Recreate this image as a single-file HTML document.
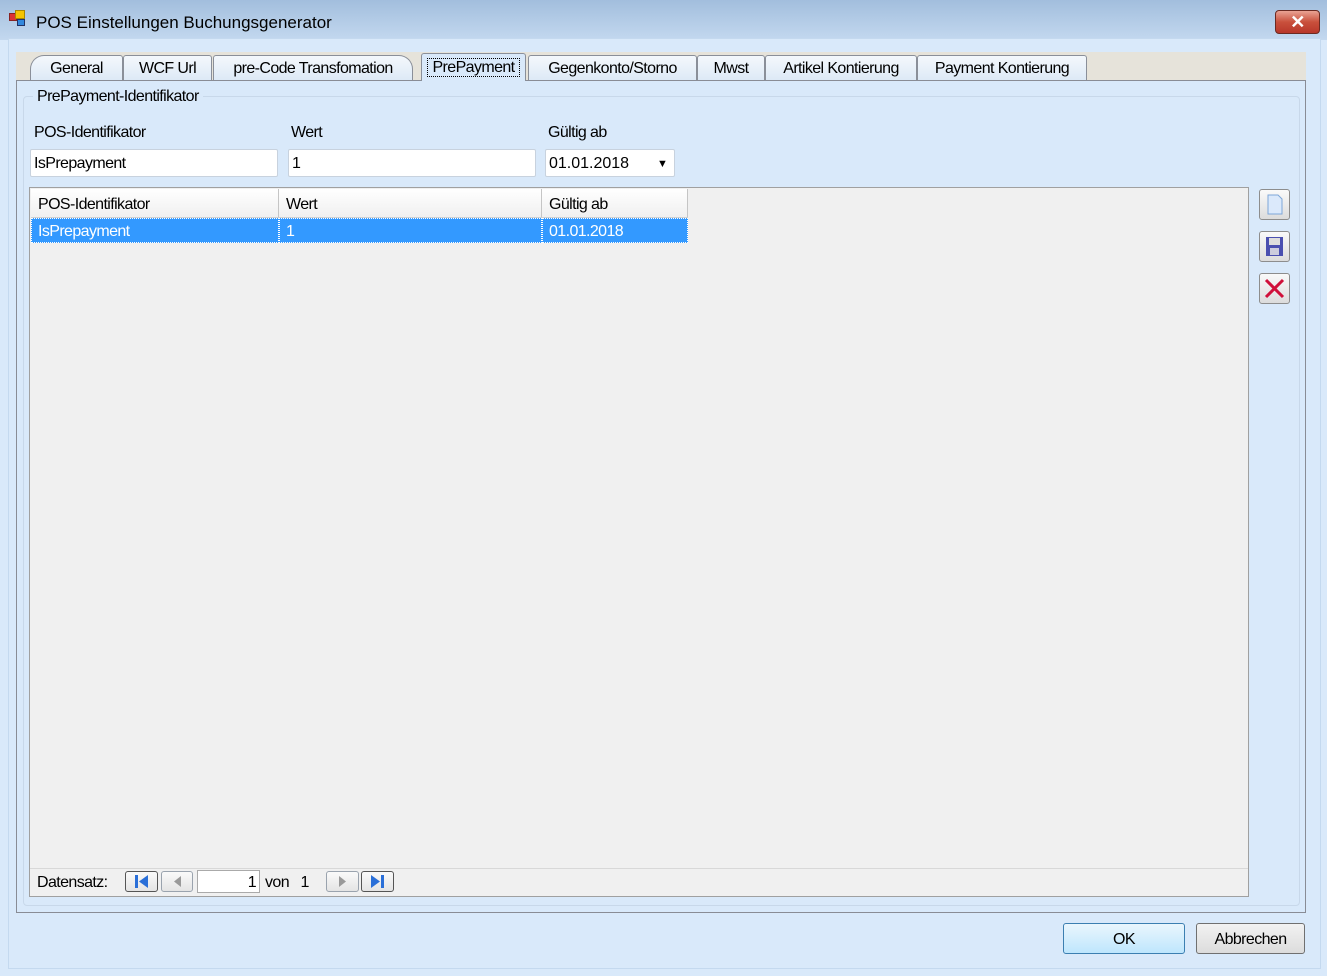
<!DOCTYPE html>
<html><head><style>
*{box-sizing:border-box;margin:0;padding:0}
body{width:1327px;height:976px;overflow:hidden;background:#d9e9fa;font-family:"Liberation Sans",sans-serif;font-size:16px;color:#000;position:relative;letter-spacing:-0.6px}
.a{position:absolute}
.title{left:0;top:0;width:1327px;height:40px;background:linear-gradient(#a2bedd,#c3d8ef)}
.tab{position:absolute;top:55px;height:25px;border:1px solid #8a8f99;border-bottom:none;background:linear-gradient(#f4f8fc,#dde9f6);border-radius:3px 3px 0 0;text-align:center;line-height:25px}
.inp{position:absolute;height:28px;background:#fff;border:1px solid #c8d2de;border-radius:2px;line-height:28px;padding-left:3px}
.hd{position:absolute;top:189px;height:29px;background:linear-gradient(#fff,#f0f0f0);border-right:1px solid #c5c5c5;border-bottom:1px solid #d0d0d0;line-height:31px;padding-left:7px}
.rw{position:absolute;top:218px;height:25px;background:#3399ff;color:#fff;line-height:25px;padding-left:6px;border:1px dotted #fff}
.sb{position:absolute;left:1259px;width:31px;height:31px;border:1px solid #8d8d8d;border-radius:3px;background:linear-gradient(#fafafa,#dcdcdc)}
.nb{position:absolute;top:871px;height:21px;border:1px solid #9aa3ae;border-radius:3px;background:linear-gradient(#fafafa,#e4e4e4)}
.btn{position:absolute;top:923px;height:31px;border:1px solid #707070;border-radius:3px;background:linear-gradient(#f2f2f2,#dcdcdc);text-align:center;line-height:31px}
</style></head><body>
<div class="a title"></div>
<div class="a" style="left:9px;top:13px;width:8px;height:8px;background:#d33;border:1px solid #822"></div>
<div class="a" style="left:15px;top:10px;width:10px;height:9px;background:#f5c400;border:1px solid #a80"></div>
<div class="a" style="left:17px;top:19px;width:8px;height:7px;background:#38d;border:1px solid #236"></div>
<div class="a" style="left:36px;top:13px;font-size:17px;letter-spacing:0">POS Einstellungen Buchungsgenerator</div>
<div class="a" style="left:1275px;top:10px;width:45px;height:24px;border:1px solid #6b2a22;border-radius:4px;background:linear-gradient(#e9a394,#c9503c 50%,#b8372a);color:#fff;text-align:center;font-weight:bold;font-size:18px;line-height:22px">✕</div>
<div class="a" style="left:8px;top:38px;width:1313px;height:931px;background:#d9e9fa;border:1px solid #c4d9ef"></div>
<div class="a" style="left:16px;top:52px;width:1290px;height:29px;background:#e6e3da"></div>
<div class="a" style="left:16px;top:80px;width:1290px;height:833px;border:1px solid #898c95;background:#d9e9fa"></div>
<div class="tab" style="left:30px;width:93px;border-radius:14px 3px 0 0">General</div>
<div class="tab" style="left:123px;width:89px">WCF Url</div>
<div class="tab" style="left:213px;width:200px;border-radius:3px 14px 0 0">pre-Code Transfomation</div>
<div class="tab" style="left:421px;top:53px;height:28px;width:105px;background:#d9e9fa;line-height:28px"><span style="border:1px dotted #000;padding:0 4px">PrePayment</span></div>
<div class="tab" style="left:528px;width:169px">Gegenkonto/Storno</div>
<div class="tab" style="left:697px;width:68px">Mwst</div>
<div class="tab" style="left:765px;width:152px">Artikel Kontierung</div>
<div class="tab" style="left:917px;width:170px">Payment Kontierung</div>
<div class="a" style="left:23px;top:96px;width:1277px;height:810px;border:1px solid #c8d8ea;border-radius:4px"></div>
<div class="a" style="left:33px;top:88px;background:#d9e9fa;padding:0 4px">PrePayment-Identifikator</div>
<div class="a" style="left:34px;top:124px">POS-Identifikator</div>
<div class="a" style="left:291px;top:124px">Wert</div>
<div class="a" style="left:548px;top:124px">Gültig ab</div>
<div class="inp" style="left:30px;top:149px;width:248px">IsPrepayment</div>
<div class="inp" style="left:288px;top:149px;width:248px">1</div>
<div class="inp" style="left:545px;top:149px;width:130px;letter-spacing:0">01.01.2018<span style="position:absolute;left:111px;top:0;font-size:11px">▼</span></div>
<div class="a" style="left:29px;top:187px;width:1220px;height:710px;background:#f0f0f0;border:1px solid #a0a0a0"></div>
<div class="hd" style="left:31px;width:248px">POS-Identifikator</div>
<div class="hd" style="left:279px;width:263px">Wert</div>
<div class="hd" style="left:542px;width:146px">Gültig ab</div>
<div class="rw" style="left:31px;width:248px">IsPrepayment</div>
<div class="rw" style="left:279px;width:263px">1</div>
<div class="rw" style="left:542px;width:146px">01.01.2018</div>
<div class="a" style="left:30px;top:868px;width:1218px;height:28px;border-top:1px solid #d8d8d8;background:#f0f0f0"></div>
<div class="a" style="left:37px;top:874px">Datensatz:</div>
<div class="nb" style="left:125px;width:33px;border-color:#555"><svg width="31" height="19"><rect x="9" y="3" width="3" height="13" fill="#2a6fd8"/><path d="M22 3 L13 9.5 L22 16Z" fill="#2a6fd8"/></svg></div>
<div class="nb" style="left:161px;width:32px"><svg width="30" height="19"><path d="M19 4 L12 9.5 L19 15Z" fill="#999"/></svg></div>
<div class="a" style="left:197px;top:870px;width:63px;height:23px;background:#fff;border:1px solid #aaa;text-align:right;padding-right:3px;line-height:23px">1</div>
<div class="a" style="left:265px;top:874px">von&nbsp;&nbsp;&nbsp;1</div>
<div class="nb" style="left:326px;width:33px"><svg width="31" height="19"><path d="M12 4 L19 9.5 L12 15Z" fill="#999"/></svg></div>
<div class="nb" style="left:361px;width:33px;border-color:#555"><svg width="31" height="19"><path d="M9 3 L18 9.5 L9 16Z" fill="#2a6fd8"/><rect x="19" y="3" width="3" height="13" fill="#2a6fd8"/></svg></div>
<div class="sb" style="top:189px"><svg width="29" height="29"><path d="M8 5 H18 L22 9 V24 H8Z" fill="#dbe9fb" stroke="#7ea6d8"/></svg></div>
<div class="sb" style="top:231px"><svg width="29" height="29"><rect x="6" y="5" width="17" height="19" fill="#4a4fb0"/><rect x="9" y="6" width="11" height="7" fill="#ddd"/><rect x="10" y="16" width="9" height="7" fill="#ccd"/></svg></div>
<div class="sb" style="top:273px"><svg width="29" height="29"><path d="M6 6 L23 23 M23 6 L6 23" stroke="#d0103a" stroke-width="3"/></svg></div>
<div class="btn" style="left:1063px;width:122px;border-color:#3c7fb1;background:linear-gradient(#eaf6fd,#bee6fd)">OK</div>
<div class="btn" style="left:1196px;width:109px">Abbrechen</div>
</body></html>
